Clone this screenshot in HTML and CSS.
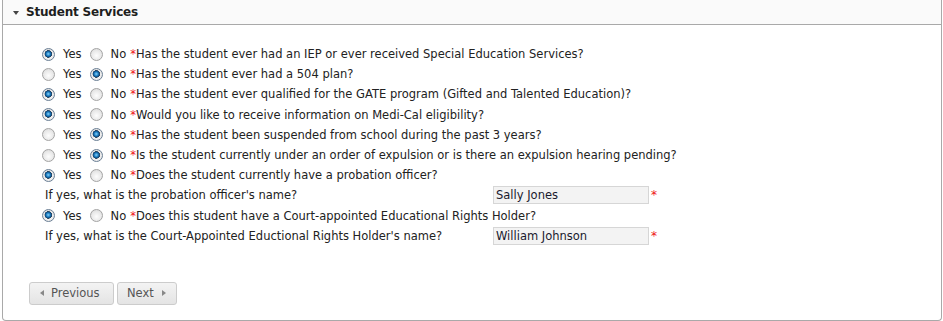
FILE: index.html
```html
<!DOCTYPE html>
<html>
<head>
<meta charset="utf-8">
<link rel="stylesheet" href="styles.css">
</head>
<body>
<div class="panel">
  <div class="panel-head">
    <span class="caret"></span>
    <span class="title">Student Services</span>
  </div>
  <div class="panel-body">
    <div class="row"><input type="radio" name="q1" checked><label>Yes</label><input type="radio" name="q1"><label class="no">No</label><span class="req">*</span>Has the student ever had an IEP or ever received Special Education Services?</div>
    <div class="row"><input type="radio" name="q2"><label>Yes</label><input type="radio" name="q2" checked><label class="no">No</label><span class="req">*</span>Has the student ever had a 504 plan?</div>
    <div class="row"><input type="radio" name="q3" checked><label>Yes</label><input type="radio" name="q3"><label class="no">No</label><span class="req">*</span>Has the student ever qualified for the GATE program (Gifted and Talented Education)?</div>
    <div class="row"><input type="radio" name="q4" checked><label>Yes</label><input type="radio" name="q4"><label class="no">No</label><span class="req">*</span>Would you like to receive information on Medi-Cal eligibility?</div>
    <div class="row"><input type="radio" name="q5"><label>Yes</label><input type="radio" name="q5" checked><label class="no">No</label><span class="req">*</span>Has the student been suspended from school during the past 3 years?</div>
    <div class="row"><input type="radio" name="q6"><label>Yes</label><input type="radio" name="q6" checked><label class="no">No</label><span class="req">*</span>Is the student currently under an order of expulsion or is there an expulsion hearing pending?</div>
    <div class="row"><input type="radio" name="q7" checked><label>Yes</label><input type="radio" name="q7"><label class="no">No</label><span class="req">*</span>Does the student currently have a probation officer?</div>
    <div class="row text-row"><span class="field-label">If yes, what is the probation officer's name?</span><input class="field" type="text" value="Sally Jones"><span class="req req-field">*</span></div>
    <div class="row"><input type="radio" name="q8" checked><label>Yes</label><input type="radio" name="q8"><label class="no">No</label><span class="req">*</span>Does this student have a Court-appointed Educational Rights Holder?</div>
    <div class="row text-row"><span class="field-label">If yes, what is the Court-Appointed Eductional Rights Holder's name?</span><input class="field" type="text" value="William Johnson"><span class="req req-field">*</span></div>
    <div class="buttons">
      <button class="btn btn-prev"><span class="tri tri-left"></span>Previous</button>
      <button class="btn btn-next"><span class="btn-text">Next</span><span class="tri tri-right"></span></button>
    </div>
  </div>
</div>
</body>
</html>
```

FILE: styles.css
```css
html, body {
  margin: 0;
  padding: 0;
  background: #ffffff;
}

body {
  font-family: "DejaVu Sans", Verdana, sans-serif;
  font-size: 11.5px;
  color: #222222;
}

.panel {
  margin-left: 2px;
  width: 940px;
  height: 321px;
  box-sizing: border-box;
  border: 1px solid #a9a9a9;
  border-top: 0;
  border-radius: 0 0 4px 4px;
  background: #ffffff;
}

.panel-head {
  height: 25px;
  box-sizing: border-box;
  border-bottom: 1px solid #a9a9a9;
  background: #fafafa;
  display: flex;
  align-items: center;
  padding-left: 10px;
}

.caret {
  width: 0;
  height: 0;
  border-left: 3.5px solid transparent;
  border-right: 3.5px solid transparent;
  border-top: 4px solid #444444;
  margin-right: 7px;
  margin-top: 1px;
}

.title {
  font-weight: bold;
  font-size: 12px;
  color: #1e1e1e;
  letter-spacing: -0.2px;
}

.panel-body {
  padding: 19px 0 0 39px;
}

.row {
  height: 20.2px;
  display: flex;
  align-items: center;
  white-space: nowrap;
}

.row input[type="radio"] {
  appearance: none;
  -webkit-appearance: none;
  width: 13px;
  height: 13px;
  margin: 0 8px 0 0;
  border: 1px solid #a4a4a4;
  border-radius: 50%;
  background: radial-gradient(circle at 50% 60%, #fdfdfd 0%, #e9e9e9 55%, #d4d4d4 100%);
  box-sizing: border-box;
  flex: none;
}

.row input[type="radio"]:checked {
  border-color: #6b7f95;
  background:
    radial-gradient(circle at 48% 45%, #8fd0f5 0, #2c8fd0 1.6px, #0b4d86 3px, #32465c 3.6px, transparent 3.9px),
    radial-gradient(circle at 50% 60%, #fdfdfd 0%, #e9e9e9 55%, #d4d4d4 100%);
}

.row label {
  margin-right: 8px;
}

.row label.no {
  margin-right: 0;
}

.req {
  color: #ee1111;
  margin-left: 4px;
}

.text-row {
  padding-left: 3px;
}

.field-label {
  width: 448px;
  flex: none;
}

.field {
  width: 156px;
  height: 18px;
  box-sizing: border-box;
  border: 1px solid #d6d6d6;
  background: #f3f3f3;
  font-family: "DejaVu Sans", Verdana, sans-serif;
  font-size: 11.5px;
  color: #1a1a2e;
  padding: 0 0 0 2px;
  margin: 0;
}

.req-field {
  margin-left: 2px;
  font-size: 12px;
}

.buttons {
  display: flex;
  gap: 3px;
  margin-top: 36px;
  margin-left: -13px;
}

.btn {
  height: 23px;
  box-sizing: border-box;
  border: 1px solid #cccccc;
  border-radius: 3px;
  background: linear-gradient(#f3f3f3, #e4e4e4);
  color: #555555;
  font-family: "DejaVu Sans", Verdana, sans-serif;
  font-size: 11.5px;
  display: flex;
  align-items: center;
  padding: 0 0 0 10px;
}

.btn-prev {
  width: 85px;
}

.btn-next {
  width: 60px;
  padding-left: 9px;
}

.tri {
  width: 0;
  height: 0;
  border-top: 3.5px solid transparent;
  border-bottom: 3.5px solid transparent;
}

.tri-left {
  border-right: 4px solid #888888;
  margin-right: 7px;
}

.tri-right {
  border-left: 4px solid #888888;
  margin-left: 8px;
}
```
